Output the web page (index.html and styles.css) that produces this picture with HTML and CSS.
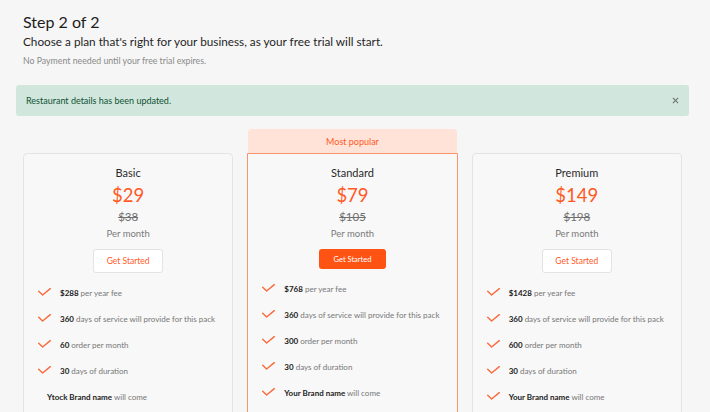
FILE: index.html
```html
<!DOCTYPE html>
<html lang="en">
<head>
<meta charset="utf-8">
<title>Choose a plan</title>
<link rel="stylesheet" href="styles.css">
</head>
<body>
<main class="page">
  <header class="intro">
    <h1 class="title">Step 2 of 2</h1>
    <p class="subtitle">Choose a plan that's right for your business, as your free trial will start.</p>
    <p class="note">No Payment needed until your free trial expires.</p>
  </header>

  <div class="alert" role="alert">
    <span class="alert-text">Restaurant details has been updated.</span>
    <button class="alert-close" aria-label="Close">
      <svg viewBox="0 0 8 8" width="7" height="7"><path d="M1 1 L7 7 M7 1 L1 7" stroke="#6f6f6f" stroke-width="1.2" fill="none"/></svg>
    </button>
  </div>

  <section class="plans">
    <article class="plan plan-basic">
      <h2 class="plan-name">Basic</h2>
      <div class="plan-price">$29</div>
      <div class="plan-old">$38</div>
      <div class="plan-period">Per month</div>
      <button class="btn btn-outline">Get Started</button>
      <ul class="features">
        <li><svg class="check" viewBox="0 0 13 8" width="13" height="8"><path d="M0.7 3.2 L4.6 7 L12.3 0.6" stroke="#fb6a3c" stroke-width="1.4" fill="none" stroke-linecap="round" stroke-linejoin="round"/></svg><span><b>$288</b> per year fee</span></li>
        <li><svg class="check" viewBox="0 0 13 8" width="13" height="8"><path d="M0.7 3.2 L4.6 7 L12.3 0.6" stroke="#fb6a3c" stroke-width="1.4" fill="none" stroke-linecap="round" stroke-linejoin="round"/></svg><span><b>360</b> days of service will provide for this pack</span></li>
        <li><svg class="check" viewBox="0 0 13 8" width="13" height="8"><path d="M0.7 3.2 L4.6 7 L12.3 0.6" stroke="#fb6a3c" stroke-width="1.4" fill="none" stroke-linecap="round" stroke-linejoin="round"/></svg><span><b>60</b> order per month</span></li>
        <li><svg class="check" viewBox="0 0 13 8" width="13" height="8"><path d="M0.7 3.2 L4.6 7 L12.3 0.6" stroke="#fb6a3c" stroke-width="1.4" fill="none" stroke-linecap="round" stroke-linejoin="round"/></svg><span><b>30</b> days of duration</span></li>
        <li class="no-icon"><span><b>Ytock Brand name</b> will come</span></li>
      </ul>
    </article>

    <div class="badge">Most popular</div>
    <article class="plan plan-featured">
      <h2 class="plan-name">Standard</h2>
      <div class="plan-price">$79</div>
      <div class="plan-old">$105</div>
      <div class="plan-period">Per month</div>
      <button class="btn btn-solid">Get Started</button>
      <ul class="features">
        <li><svg class="check" viewBox="0 0 13 8" width="13" height="8"><path d="M0.7 3.2 L4.6 7 L12.3 0.6" stroke="#fb6a3c" stroke-width="1.4" fill="none" stroke-linecap="round" stroke-linejoin="round"/></svg><span><b>$768</b> per year fee</span></li>
        <li><svg class="check" viewBox="0 0 13 8" width="13" height="8"><path d="M0.7 3.2 L4.6 7 L12.3 0.6" stroke="#fb6a3c" stroke-width="1.4" fill="none" stroke-linecap="round" stroke-linejoin="round"/></svg><span><b>360</b> days of service will provide for this pack</span></li>
        <li><svg class="check" viewBox="0 0 13 8" width="13" height="8"><path d="M0.7 3.2 L4.6 7 L12.3 0.6" stroke="#fb6a3c" stroke-width="1.4" fill="none" stroke-linecap="round" stroke-linejoin="round"/></svg><span><b>300</b> order per month</span></li>
        <li><svg class="check" viewBox="0 0 13 8" width="13" height="8"><path d="M0.7 3.2 L4.6 7 L12.3 0.6" stroke="#fb6a3c" stroke-width="1.4" fill="none" stroke-linecap="round" stroke-linejoin="round"/></svg><span><b>30</b> days of duration</span></li>
        <li><svg class="check" viewBox="0 0 13 8" width="13" height="8"><path d="M0.7 3.2 L4.6 7 L12.3 0.6" stroke="#fb6a3c" stroke-width="1.4" fill="none" stroke-linecap="round" stroke-linejoin="round"/></svg><span><b>Your Brand name</b> will come</span></li>
      </ul>
    </article>

    <article class="plan plan-premium">
      <h2 class="plan-name">Premium</h2>
      <div class="plan-price">$149</div>
      <div class="plan-old">$198</div>
      <div class="plan-period">Per month</div>
      <button class="btn btn-outline">Get Started</button>
      <ul class="features">
        <li><svg class="check" viewBox="0 0 13 8" width="13" height="8"><path d="M0.7 3.2 L4.6 7 L12.3 0.6" stroke="#fb6a3c" stroke-width="1.4" fill="none" stroke-linecap="round" stroke-linejoin="round"/></svg><span><b>$1428</b> per year fee</span></li>
        <li><svg class="check" viewBox="0 0 13 8" width="13" height="8"><path d="M0.7 3.2 L4.6 7 L12.3 0.6" stroke="#fb6a3c" stroke-width="1.4" fill="none" stroke-linecap="round" stroke-linejoin="round"/></svg><span><b>360</b> days of service will provide for this pack</span></li>
        <li><svg class="check" viewBox="0 0 13 8" width="13" height="8"><path d="M0.7 3.2 L4.6 7 L12.3 0.6" stroke="#fb6a3c" stroke-width="1.4" fill="none" stroke-linecap="round" stroke-linejoin="round"/></svg><span><b>600</b> order per month</span></li>
        <li><svg class="check" viewBox="0 0 13 8" width="13" height="8"><path d="M0.7 3.2 L4.6 7 L12.3 0.6" stroke="#fb6a3c" stroke-width="1.4" fill="none" stroke-linecap="round" stroke-linejoin="round"/></svg><span><b>30</b> days of duration</span></li>
        <li><svg class="check" viewBox="0 0 13 8" width="13" height="8"><path d="M0.7 3.2 L4.6 7 L12.3 0.6" stroke="#fb6a3c" stroke-width="1.4" fill="none" stroke-linecap="round" stroke-linejoin="round"/></svg><span><b>Your Brand name</b> will come</span></li>
      </ul>
    </article>
  </section>
</main>
</body>
</html>
```

FILE: styles.css
```css
* {
  box-sizing: border-box;
}

html, body {
  margin: 0;
  padding: 0;
  background: #f6f6f6;
}

body {
  font-family: "Lato", "Open Sans", "Liberation Sans", sans-serif;
  color: #222;
}

.page {
  width: 673px;
  margin-left: 16px;
  padding-top: 12px;
}

.intro {
  padding-left: 7px;
}

.title {
  margin: 0;
  font-size: 16px;
  line-height: 20px;
  font-weight: 400;
  color: #1d1d1d;
}

.subtitle {
  margin: 3px 0 0;
  font-size: 11.75px;
  line-height: 14px;
  color: #1f1f1f;
}

.note {
  margin: 6px 0 0;
  font-size: 8.75px;
  line-height: 12px;
  color: #8a8a8a;
}

.alert {
  margin-top: 18px;
  height: 31px;
  display: flex;
  align-items: center;
  padding: 0 9px 0 10px;
  background: #d1e7dd;
  border-radius: 3px;
  color: #0f5132;
  font-size: 9px;
}

.alert-close {
  margin-left: auto;
  border: 0;
  background: none;
  padding: 0;
  width: 10px;
  height: 10px;
  display: flex;
  align-items: center;
  justify-content: center;
}

.plans {
  margin-top: 13px;
  padding: 0 7px;
  display: grid;
  grid-template-columns: repeat(3, 1fr);
  grid-template-rows: 24px auto;
  column-gap: 14px;
}

.plan {
  grid-row: 2;
  background: #f8f8f8;
  border: 1px solid #e4e4e4;
  border-radius: 4px;
  padding: 12px 0 20px;
  display: flex;
  flex-direction: column;
  align-items: center;
}

.plan-basic {
  grid-column: 1;
}

.plan.plan-featured {
  grid-column: 2;
  border: 1px solid #f6946e;
  border-radius: 0 0 4px 4px;
}

.plan-premium {
  grid-column: 3;
}

.badge {
  grid-column: 2;
  grid-row: 1;
  margin: 0 1px;
  background: #ffe2d8;
  border-radius: 4px 4px 0 0;
  color: #ff5a1f;
  font-size: 9px;
  display: flex;
  align-items: center;
  justify-content: center;
}

.plan-name {
  margin: 0;
  font-size: 11px;
  line-height: 14px;
  font-weight: 400;
  color: #2a2a2a;
}

.plan-price {
  margin-top: 4px;
  font-size: 18.5px;
  line-height: 22px;
  color: #ff5a1f;
}

.plan-old {
  margin-top: 4px;
  font-size: 11.5px;
  line-height: 14px;
  color: #6f6f6f;
  text-decoration: line-through;
}

.plan-period {
  margin-top: 4px;
  font-size: 9.5px;
  line-height: 12px;
  color: #7a7a7a;
}

.btn {
  margin-top: 9px;
  font-family: inherit;
  border-radius: 3px;
  cursor: pointer;
}

.btn-outline {
  width: 70px;
  height: 24px;
  background: #fff;
  border: 1px solid #e3e3e3;
  color: #ff5a1f;
  font-size: 8.5px;
}

.btn-solid {
  width: 67px;
  height: 20px;
  background: #ff5314;
  border: 0;
  color: #fff;
  font-size: 7.5px;
}

.features {
  list-style: none;
  margin: 7px 0 0;
  padding: 0 0 0 14px;
  align-self: stretch;
}

.features li {
  height: 26px;
  display: flex;
  align-items: center;
  font-size: 8px;
  color: #777;
}

.features li b {
  font-weight: 700;
  color: #222;
}

.check {
  flex: none;
  margin-right: 9px;
  margin-top: -2px;
}

.features li.no-icon {
  padding-left: 9px;
}
```
